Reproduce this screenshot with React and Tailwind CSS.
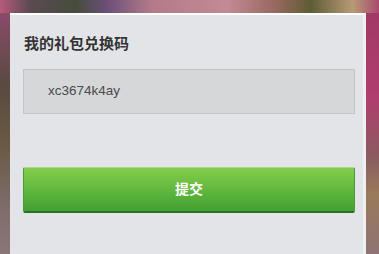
import React from 'react';

export default function App() {
  return (
    <div
      className="w-[379px] h-[254px] overflow-hidden flex flex-col bg-[linear-gradient(90deg,#b85a7c_0%,#5a4a52_8%,#464c3c_20%,#6a4f78_28%,#b47a8a_40%,#c28a94_60%,#9a6a62_72%,#5e5c34_82%,#b89a76_93%,#a84a6e_100%)]"
      style={{ fontFamily: '"Liberation Sans", "Noto Sans CJK SC", sans-serif' }}
    >
      <div className="h-[13px] shrink-0" />
      <div className="flex flex-1">
        <div className="w-[10px] bg-[linear-gradient(180deg,#8a4a6a_0%,#5a4a40_30%,#6a5a44_55%,#7e6c6a_80%,#8a7676_100%)]" />
        <div className="flex-1 bg-[#e3e4e7] border-t-2 border-white border-r-[3px] border-r-[#eef0f2] pl-[13px] pr-[8px] pt-[19px]">
          <div className="pl-[1px] text-[15px] font-bold text-[#333] leading-[20px]">我的礼包兑换码</div>
          <div className="mt-[15px] h-[45px] bg-[#d6d7d9] border border-[#c3c4c6] flex items-center pl-[24px] text-[13.5px] text-[#4a4a4a]">
            xc3674k4ay
          </div>
          <div className="mt-[53px] h-[46px] rounded-[2px] border-x border-x-[#4a9a3a] border-t border-t-[#a6dc84] border-b-2 border-b-[#2e6e2a] bg-[linear-gradient(180deg,#84cd4c_0%,#62b83e_50%,#42a032_100%)] flex items-center justify-center text-[14px] font-bold text-white">
            提交
          </div>
        </div>
        <div className="w-[13px] bg-[linear-gradient(180deg,#a03a64_0%,#b03e6e_35%,#8a5c60_60%,#9a7a5a_75%,#8e7474_100%)]" />
      </div>
    </div>
  );
}
